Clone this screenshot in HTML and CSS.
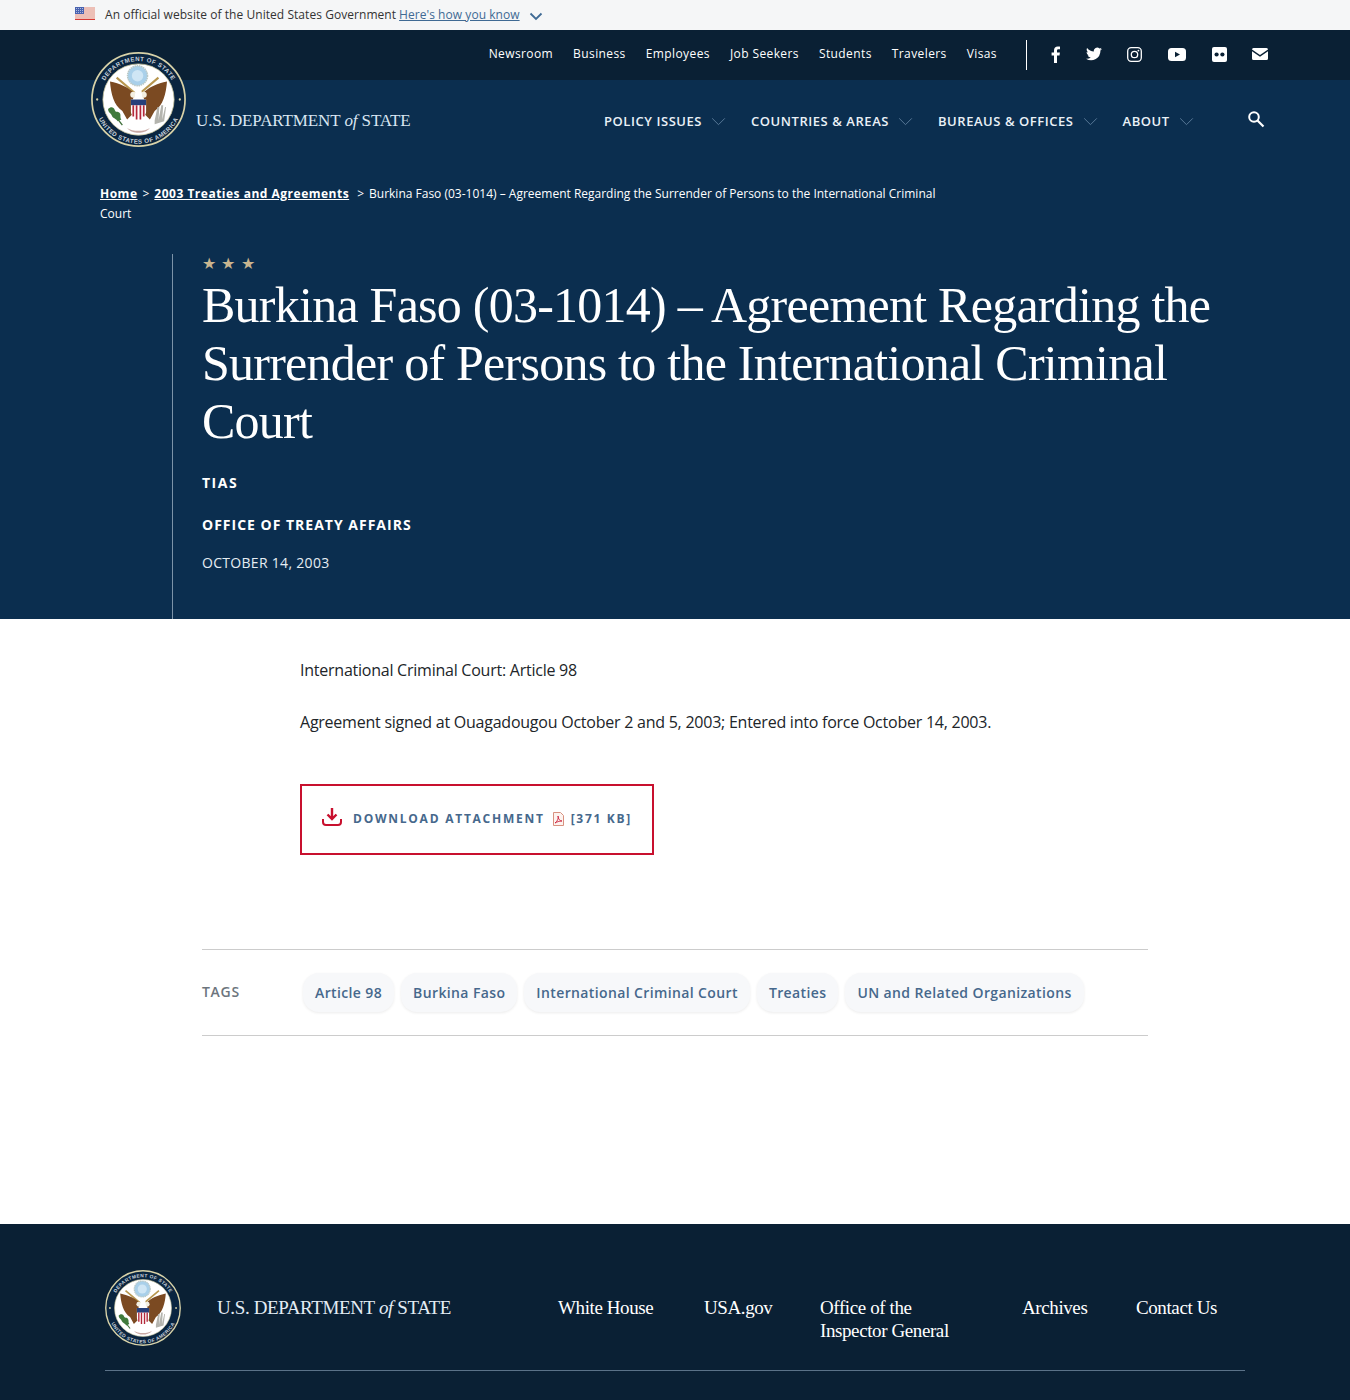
FILE: index.html
```html
<!DOCTYPE html>
<html lang="en">
<head>
<meta charset="utf-8">
<title>Burkina Faso (03-1014) – Agreement Regarding the Surrender of Persons to the International Criminal Court</title>
<link rel="stylesheet" href="styles.css">
</head>
<body>
<svg class="defs" width="0" height="0" aria-hidden="true">
  <defs>
    <path id="arcTop" d="M9.500 50a40.500 40.500 0 0 1 81 0"/>
    <path id="arcBot" d="M3.500 50a46.500 46.500 0 0 0 93 0"/>
    <symbol id="seal" viewBox="0 0 100 100">
      <circle cx="50" cy="50" r="49" fill="#0a2540" stroke="#d8d2a8" stroke-width="1.800"/>
      <circle cx="50" cy="50" r="37.500" fill="#fff" stroke="#c9c39a" stroke-width=".8"/>
      <text class="seal-text"><textPath href="#arcTop" startOffset="50%" text-anchor="middle">DEPARTMENT OF STATE</textPath></text>
      <text class="seal-text"><textPath href="#arcBot" startOffset="50%" text-anchor="middle">UNITED STATES OF AMERICA</textPath></text>
      <circle cx="6.500" cy="50" r="1.200" fill="#d8d2a8"/>
      <circle cx="93.500" cy="50" r="1.200" fill="#d8d2a8"/>
      <circle cx="49" cy="25" r="10.500" fill="#a9d0ea" stroke="#b9c7c4" stroke-width="1.600" stroke-dasharray="1.500 .8"/>
      <circle cx="49" cy="25" r="6" fill="#cfe6f5"/>
      <path d="M27 27l20 17M71 27L51 44" stroke="#b8974f" stroke-width="2.200"/>
      <path d="M46 44C40 37 30 33 20 31 21 44 24 56 33 62L38 71 43 66 44 50Z" fill="#7b4a22"/>
      <path d="M54 44C60 37 70 33 80 31 79 44 76 56 67 62L62 71 57 66 56 50Z" fill="#7b4a22"/>
      <circle cx="44.500" cy="45" r="3.200" fill="#f3efe2"/>
      <circle cx="55.500" cy="45" r="3.200" fill="#f3efe2"/>
      <path d="M46.500 43a3.500 3.500 0 0 1 7 0l.5 6h-8Z" fill="#fff"/>
      <path d="M42 50h16v13c0 4-4 6-8 9-4-3-8-5-8-9Z" fill="#fff"/>
      <path d="M42 50h16v6H42Z" fill="#27407a"/>
      <path d="M44.500 56v12M48 56v15M52 56v15M55.500 56v12" stroke="#b4283a" stroke-width="1.800"/>
      <path d="M20 60l13 17" stroke="#3f6f3a" stroke-width="1.400"/>
      <path d="M18 60c3-3 6-2 7 1s3 1 5 3 0 5 2 7l-4 2c-1-3-5-3-6-6s-4-3-4-7Z" fill="#3f7a3c"/>
      <path d="M67 72l3-14 2 0-1 14 3-16 2 0-1 15 3-13 1 0-2 15-10 3Z" fill="#b4b4ae"/>
      <path d="M38 80c6 4 18 4 24 0-3 4-8 5-12 5s-9-1-12-5Z" fill="#c9a9a4"/>
    </symbol>
    <symbol id="chev" viewBox="0 0 16 10">
      <path d="M1 1.500l7 7 7-7" fill="none" stroke="currentColor" stroke-width="1"/>
    </symbol>
  </defs>
</svg>

<div class="gov-banner">
  <svg class="flag" viewBox="0 0 20 13" width="20" height="13" aria-hidden="true">
    <rect width="20" height="13" fill="#f4f4f4"/>
    <path d="M0 1h20M0 3h20M0 5h20M0 7h20M0 9h20M0 11h20" stroke="#e58a78" stroke-width="1"/>
    <rect y="12" width="20" height="1" fill="#d83933"/>
    <rect width="9" height="7" fill="#4a63b0"/>
    <path d="M1 1.500h7M1 3.500h7M1 5.500h7" stroke="#c8d0ea" stroke-width=".8" stroke-dasharray="1 1"/>
  </svg>
  <span class="gov-text">An official website of the United States Government</span>
  <a class="gov-link" href="#">Here's how you know</a>
  <svg class="gov-chev" width="14" height="9" viewBox="0 0 14 9" aria-hidden="true"><path d="M1.500 1.500L7 7l5.500-5.500" fill="none" stroke="#3f6a94" stroke-width="1.800"/></svg>
</div>

<header class="hero">
  <div class="topbar">
    <nav class="toplinks">
      <a href="#">Newsroom</a><a href="#">Business</a><a href="#">Employees</a><a href="#">Job Seekers</a><a href="#">Students</a><a href="#">Travelers</a><a href="#">Visas</a>
    </nav>
    <div class="social">
      <svg class="ic ic-fb" width="10" height="17" viewBox="0 0 10 17"><path d="M3 17V9.500H.6V6.600H3V4.500C3 2 4.500.6 6.800.6c1 0 1.900.1 2.200.1v2.600H7.500c-1.200 0-1.500.6-1.500 1.400v1.900h2.900l-.4 2.900H6V17Z" fill="#fff"/></svg>
      <svg class="ic ic-tw" width="16" height="14" viewBox="0 0 16 14"><path d="M16 2c-.6.3-1.200.4-1.900.5.700-.4 1.200-1 1.400-1.800-.6.4-1.300.7-2 .8A3.300 3.300 0 0 0 7.900 4.500C5.200 4.400 2.800 3 1.100.9.200 2.400.7 4.300 2.100 5.300c-.5 0-1-.2-1.500-.4 0 1.600 1.100 3 2.600 3.300-.5.100-1 .1-1.500 0 .4 1.300 1.600 2.200 3.100 2.300A6.600 6.600 0 0 1 0 11.700 9.300 9.300 0 0 0 14.400 3.400c.7-.4 1.200-.9 1.600-1.400Z" fill="#fff"/></svg>
      <svg class="ic ic-ig" width="15" height="15" viewBox="0 0 15 15"><rect x=".7" y=".7" width="13.600" height="13.600" rx="3.500" fill="none" stroke="#fff" stroke-width="1.300"/><circle cx="7.500" cy="7.500" r="3.200" fill="none" stroke="#fff" stroke-width="1.300"/><circle cx="11.400" cy="3.600" r=".9" fill="#fff"/></svg>
      <svg class="ic ic-yt" width="18" height="13" viewBox="0 0 18 13"><rect width="18" height="13" rx="3.500" fill="#fff"/><path d="M7 3.700v5.600L12 6.500Z" fill="#0a2034"/></svg>
      <svg class="ic ic-fl" width="15" height="15" viewBox="0 0 15 15"><rect width="15" height="15" rx="2" fill="#fff"/><circle cx="4.600" cy="7.500" r="2.100" fill="#0a2034"/><circle cx="10.400" cy="7.500" r="2.100" fill="#0a2034"/></svg>
      <svg class="ic ic-ml" width="16" height="12" viewBox="0 0 16 12"><path d="M1.500 0h13A1.500 1.500 0 0 1 16 1.500L8 7 0 1.500A1.500 1.500 0 0 1 1.500 0Z" fill="#fff"/><path d="M0 3.200V10.500A1.500 1.500 0 0 0 1.500 12h13a1.500 1.500 0 0 0 1.500-1.500V3.200L8 8.700Z" fill="#fff"/></svg>
    </div>
  </div>

  <svg class="seal-main" width="95" height="95" aria-hidden="true"><use href="#seal"/></svg>

  <div class="mainbar">
    <a class="wordmark" href="#">U.S. DEPARTMENT <i>of</i> STATE</a>
    <nav class="mainnav">
      <a href="#">POLICY ISSUES<svg width="15" height="9"><use href="#chev"/></svg></a>
      <a href="#">COUNTRIES &amp; AREAS<svg width="15" height="9"><use href="#chev"/></svg></a>
      <a href="#">BUREAUS &amp; OFFICES<svg width="15" height="9"><use href="#chev"/></svg></a>
      <a href="#">ABOUT<svg width="15" height="9"><use href="#chev"/></svg></a>
    </nav>
    <svg class="search" width="18" height="18" viewBox="0 0 18 18" aria-hidden="true"><circle cx="7" cy="7" r="4.800" fill="none" stroke="#fff" stroke-width="2"/><path d="M10.500 10.500l6 6" stroke="#fff" stroke-width="2.200"/></svg>
  </div>

  <div class="breadcrumb"><a href="#">Home</a><span class="sep">&gt;</span><a href="#">2003 Treaties and Agreements</a><span class="sep sep-last">&gt;</span>Burkina Faso (03-1014) – Agreement Regarding the Surrender of Persons to the International Criminal Court</div>

  <div class="heading">
    <div class="stars">★ ★ ★</div>
    <h1>Burkina Faso (03-1014) – Agreement Regarding the Surrender of Persons to the International Criminal Court</h1>
    <p class="meta meta-tias">TIAS</p>
    <p class="meta meta-office">OFFICE OF TREATY AFFAIRS</p>
    <p class="date">OCTOBER 14, 2003</p>
  </div>
</header>

<main class="content">
  <div class="article">
    <p>International Criminal Court: Article 98</p>
    <p>Agreement signed at Ouagadougou October 2 and 5, 2003; Entered into force October 14, 2003.</p>
    <a class="download" href="#">
      <svg class="dl-icon" width="20" height="18" viewBox="0 0 20 18" aria-hidden="true"><path d="M10 0v10M5.500 6.500L10 11l4.500-4.500" fill="none" stroke="#c8102e" stroke-width="2.400"/><path d="M1 11v3c0 1.700 1 3 3 3h12c2 0 3-1.300 3-3v-3" fill="none" stroke="#c8102e" stroke-width="2"/></svg>
      <span class="dl-label">DOWNLOAD ATTACHMENT</span>
      <svg class="pdf" width="13" height="14" viewBox="0 0 13 14" aria-hidden="true"><path d="M1.500.5h7l3 3v10h-10Z" fill="#fdf3ef" stroke="#d8917f"/><path d="M3 11c2-1 4-5 3-7 0 3 2 5 4 5-3 0-5 1-7 2Z" fill="none" stroke="#c8102e" stroke-width=".8"/></svg>
      <span class="dl-size">[371 KB]</span>
    </a>
  </div>
  <div class="tags">
    <span class="tags-label">TAGS</span>
    <div class="tag-list">
      <a href="#">Article 98</a><a href="#">Burkina Faso</a><a href="#">International Criminal Court</a><a href="#">Treaties</a><a href="#">UN and Related Organizations</a>
    </div>
  </div>
</main>

<footer class="footer">
  <div class="foot-row">
    <svg class="seal-foot" width="76" height="76" aria-hidden="true"><use href="#seal"/></svg>
    <a class="foot-mark" href="#">U.S. DEPARTMENT <i>of</i> STATE</a>
    <nav class="foot-links">
      <a href="#">White House</a><a href="#">USA.gov</a><a class="foot-oig" href="#">Office of the Inspector General</a><a href="#">Archives</a><a href="#">Contact Us</a>
    </nav>
  </div>
</footer>
</body>
</html>
```
FILE: styles.css
```css
* { box-sizing: border-box; }
html, body { margin: 0; padding: 0; }
body { font-family: "Open Sans", sans-serif; background: #fff; color: #212529; height: 1400px; overflow: hidden; }
a { color: inherit; text-decoration: none; }
.defs { position: absolute; }
.seal-text { font: 700 6.400px "Liberation Sans", sans-serif; fill: #c9d2dc; letter-spacing: .5px; }

.gov-banner { height: 30px; background: #f5f6f7; display: flex; align-items: center; padding-left: 75px; font-size: 12px; letter-spacing: .05px; color: #333; }
.gov-text, .gov-link { margin-top: -2px; }
.flag { margin-right: 10px; margin-top: -4px; }
.gov-link { margin-left: 3px; color: #3f6a94; text-decoration: underline; }
.gov-chev { margin-left: 9px; margin-top: 2px; }

.hero { position: relative; height: 589px; background: #0b2e4f; color: #fff; }
.topbar { height: 50px; background: #0a2034; display: flex; justify-content: flex-end; align-items: center; padding-right: 82px; }
.toplinks { display: flex; gap: 20px; font-size: 12px; letter-spacing: .4px; margin-top: -3px; }
.social { height: 30px; margin-left: 29px; padding-left: 24px; border-left: 1px solid #fff; display: flex; align-items: center; }
.social svg { margin-top: -2px; }
.ic-tw { margin-left: 25px; }
.ic-ig { margin-left: 25px; }
.ic-yt { margin-left: 26px; }
.ic-fl { margin-left: 26px; }
.ic-ml { margin-left: 25px; }

.seal-main { position: absolute; left: 91px; top: 22px; }

.mainbar { height: 80px; display: flex; align-items: center; padding-left: 196px; position: relative; }
.wordmark { font: 400 17px "Liberation Serif", serif; color: #d9e6f2; width: 408px; margin-top: 1px; letter-spacing: -.11px; white-space: nowrap; }
.mainnav { display: flex; gap: 25px; font-size: 13px; font-weight: 600; letter-spacing: .55px; color: #eaf1f7; margin-top: 2px; }
.mainnav a { display: flex; align-items: center; }
.mainnav svg { margin-left: 9px; color: #5f7f9d; }
.search { margin-left: 53px; margin-top: -2px; }

.breadcrumb { margin: 24px 0 0 100px; width: 850px; font-size: 12px; line-height: 20px; color: #fff; height: 70px; }
.breadcrumb a { font-weight: 700; letter-spacing: .5px; text-decoration: underline; }
.sep { margin: 0 5px; }
.sep-last { margin: 0 5px 0 8px; }

.heading { margin-left: 172px; border-left: 1px solid #7c93a8; padding-left: 29px; height: 365px; }
.stars { font-size: 16px; line-height: 18px; color: #c9b58f; letter-spacing: .6px; }
h1 { margin: 4px 0 0; font: 400 50px/58px "Liberation Serif", serif; letter-spacing: -.75px; width: 1040px; color: #fff; }
.meta { margin: 0; font-size: 14px; font-weight: 700; line-height: 20px; }
.meta-tias { margin-top: 23px; letter-spacing: 1.500px; }
.meta-office { margin-top: 22px; letter-spacing: 1px; }
.date { margin: 18px 0 0; font-size: 14px; letter-spacing: .3px; line-height: 20px; color: #e6edf3; }

.content { height: 605px; padding: 0 202px; }
.article { padding: 38px 0 0 98px; height: 330px; }
.article p { margin: 0 0 26px; font-size: 16px; line-height: 26px; letter-spacing: -.24px; color: #212529; }
.download { margin-top: 49px; width: 354px; height: 71px; border: 2px solid #c8102e; display: flex; align-items: center; padding-left: 20px; font-size: 12px; font-weight: 700; letter-spacing: 1.750px; color: #46688c; }
.dl-icon { margin: -5px 0 0; }
.dl-label { margin: -3px 0 0 11px; }
.pdf { margin: -1px 0 0 7px; }
.dl-size { margin: -3px 0 0 6px; letter-spacing: 1.700px; }

.tags { height: 87px; border-top: 1px solid #ccc; border-bottom: 1px solid #ccc; display: flex; align-items: center; }
.tags-label { width: 98px; font-size: 14px; font-weight: 600; letter-spacing: .7px; color: #6c757d; margin-top: -3px; }
.tag-list { display: flex; gap: 7px; margin-left: 3px; }
.tag-list a { height: 39px; line-height: 39px; padding: 0 12px; border-radius: 16px; background: #f7f8fa; box-shadow: 0 1px 3px rgba(0,0,0,.08); font-size: 14px; font-weight: 600; letter-spacing: .38px; color: #46688c; }

.footer { height: 176px; background: #0a2034; padding: 46px 105px 0; color: #fff; }
.foot-row { height: 101px; border-bottom: 1px solid #5b7288; display: flex; align-items: flex-start; }
.seal-foot { flex: none; }
.foot-mark { margin: 27px 0 0 36px; width: 341px; font: 400 19px "Liberation Serif", serif; color: #e3ecf4; white-space: nowrap; letter-spacing: -.37px; }
.foot-links { display: grid; grid-template-columns: 146px 116px 202px 114px auto; margin-top: 26px; font: 400 19px/23px "Liberation Serif", serif; color: #fff; letter-spacing: -.4px; }
.foot-oig { width: 152px; }
```
